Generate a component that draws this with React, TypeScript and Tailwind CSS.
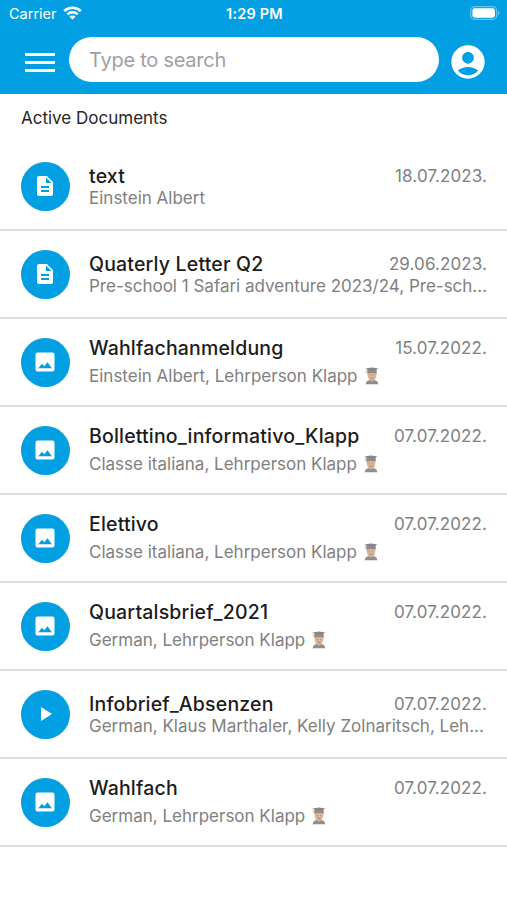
import React from 'react';
import { MdAccountCircle, MdDescription, MdPlayArrow } from 'react-icons/md';

interface DocumentItem {
  title: string;
  recipients: string;
  date: string;
  type: 'text' | 'image' | 'video';
  teacher?: boolean;
}

const documents: DocumentItem[] = [
  { title: 'text', recipients: 'Einstein Albert', date: '18.07.2023.', type: 'text' },
  {
    title: 'Quaterly Letter Q2',
    recipients: 'Pre-school 1 Safari adventure 2023/24, Pre-sch...',
    date: '29.06.2023.',
    type: 'text',
  },
  {
    title: 'Wahlfachanmeldung',
    recipients: 'Einstein Albert, Lehrperson Klapp',
    date: '15.07.2022.',
    type: 'image',
    teacher: true,
  },
  {
    title: 'Bollettino_informativo_Klapp',
    recipients: 'Classe italiana, Lehrperson Klapp',
    date: '07.07.2022.',
    type: 'image',
    teacher: true,
  },
  {
    title: 'Elettivo',
    recipients: 'Classe italiana, Lehrperson Klapp',
    date: '07.07.2022.',
    type: 'image',
    teacher: true,
  },
  {
    title: 'Quartalsbrief_2021',
    recipients: 'German, Lehrperson Klapp',
    date: '07.07.2022.',
    type: 'image',
    teacher: true,
  },
  {
    title: 'Infobrief_Absenzen',
    recipients: 'German, Klaus Marthaler, Kelly Zolnaritsch, Leh...',
    date: '07.07.2022.',
    type: 'video',
  },
  {
    title: 'Wahlfach',
    recipients: 'German, Lehrperson Klapp',
    date: '07.07.2022.',
    type: 'image',
    teacher: true,
  },
];

const ImageIcon: React.FC<{ className?: string }> = ({ className }) => (
  <svg className={className} viewBox="0 0 24 24">
    <path
      d="M4.500 2.500h15a2 2 0 0 1 2 2v15a2 2 0 0 1-2 2h-15a2 2 0 0 1-2-2v-15a2 2 0 0 1 2-2zM5.300 18.300h13.500l-4.200-6-3.300 4-2.400-2.500z"
      fill="currentColor"
      fillRule="evenodd"
    />
  </svg>
);

const icons = {
  text: MdDescription,
  image: ImageIcon,
  video: MdPlayArrow,
};

const WifiIcon = () => (
  <svg className="-mt-[2px] ml-[6px] h-[14px] w-[19px]" viewBox="0 0 19 14" fill="none">
    <path d="M1.200 5.100a11.900 11.900 0 0 1 16.600 0" stroke="white" strokeWidth="2.600" />
    <path d="M4.300 8.300a7.500 7.500 0 0 1 10.400 0" stroke="white" strokeWidth="2.400" />
    <path d="M9.500 13.600 6.400 10.700a4.400 4.400 0 0 1 6.200 0z" fill="white" />
  </svg>
);

const BatteryIcon = () => (
  <svg className="-mt-[2px] h-[14px] w-[30px]" viewBox="0 0 30 14" fill="none">
    <rect x="0.7" y="0.7" width="26" height="12.6" rx="3.8" stroke="white" strokeOpacity="0.4" strokeWidth="1.2" />
    <rect x="2.4" y="2.3" width="22.6" height="9.4" rx="2.4" fill="white" />
    <path d="M28 4.900v4.200c.9-.4 1.400-1.200 1.400-2.100s-.5-1.700-1.400-2.100z" fill="white" fillOpacity="0.4" />
  </svg>
);

// Faded teacher emoji shown after the recipients
const TeacherIcon = () => (
  <svg className="ml-[6px] h-[18px] w-[16px] shrink-0" viewBox="0 0 16 18">
    <path d="M1.700 17.300c.2-2.600 1.900-3.900 4.300-4.200h4c2.400.3 4.100 1.600 4.300 4.200z" fill="#8e8e91" />
    <path d="M5.900 11h4.200v2.500L8 15.100l-2.100-1.600z" fill="#cda78c" />
    <ellipse cx="8" cy="8.600" rx="4.300" ry="5" fill="#d8b69c" />
    <path d="M3.600 8.200V4h8.800v4.200l-1-2.200H4.600z" fill="#9b8374" />
    <path d="M3.300 2h9.400v3.700c-2.600-.8-6.800-.8-9.400 0z" fill="#8e8e91" />
    <path d="M1.300 1.400 8 .6l6.700.8L8 3.800z" fill="#858588" />
    <path d="M2.100 1.800v4.300" stroke="#d0c4ae" strokeWidth=".8" />
    <path d="M6 8.300h.9M9.100 8.300h.9M6.700 11.200h2.600" stroke="#9b7b68" strokeWidth=".8" />
  </svg>
);

const DocumentRow: React.FC<{ item: DocumentItem }> = ({ item }) => {
  const Icon = icons[item.type];

  return (
    <li className="flex h-[88px] items-center border-b-2 border-[#dedede] pr-5 pl-[20.5px]">
      <div className="flex size-[49px] shrink-0 items-center justify-center rounded-full bg-[#039fe3] text-white">
        <Icon className="size-6" />
      </div>
      <div className={item.teacher ? 'mb-[2px] ml-[19.500px] min-w-0 flex-1' : 'mb-[1px] ml-[19.500px] min-w-0 flex-1'}>
        <div className="flex items-center justify-between">
          <h2 className="text-[19.5px] leading-6 font-medium tracking-[0.18px] whitespace-nowrap text-[#1c1c1c]">
            {item.title}
          </h2>
          <span className="text-[17px] leading-6 tracking-[0.1px] whitespace-nowrap text-[#808080]">{item.date}</span>
        </div>
        <div className={item.teacher ? 'mt-[5px] flex h-[22px] items-center' : 'flex h-5 items-center'}>
          <p className="text-[17px] leading-5 whitespace-nowrap text-[#808080]">{item.recipients}</p>
          {item.teacher && <TeacherIcon />}
        </div>
      </div>
    </li>
  );
};

export default function App() {
  return (
    <div className="min-h-[900px] w-[507px] overflow-hidden bg-white font-['Inter',sans-serif]">
      <header className="h-[94px] bg-[#039fe3] text-white">
        <div className="grid h-[27px] grid-cols-3 items-center pr-[7px] pl-[9px] text-[14.5px]">
          <div className="flex items-center">
            <span>Carrier</span>
            <WifiIcon />
          </div>
          <span className="text-center font-semibold tracking-[0.2px]">1:29 PM</span>
          <div className="flex justify-end">
            <BatteryIcon />
          </div>
        </div>
        <div className="mt-[10px] flex items-center pl-[25px]">
          <button className="mt-[5px] flex w-[30px] flex-col gap-[5px]" aria-label="Menu">
            <span className="h-[3px] bg-white" />
            <span className="h-[3px] bg-white" />
            <span className="h-[3px] bg-white" />
          </button>
          <input
            className="ml-[14px] h-[45px] w-[370px] rounded-full bg-white px-5 text-[20px] tracking-[-0.25px] text-black placeholder:text-[#a0a0a0]"
            placeholder="Type to search"
          />
          <MdAccountCircle className="mt-[5px] ml-[9px] size-10" />
        </div>
      </header>
      <main>
        <h1 className="flex h-[49px] items-center pl-[21px] text-[17px] text-[#262626]">Active Documents</h1>
        <ul>
          {documents.map((item) => (
            <DocumentRow key={item.title} item={item} />
          ))}
        </ul>
      </main>
    </div>
  );
}
